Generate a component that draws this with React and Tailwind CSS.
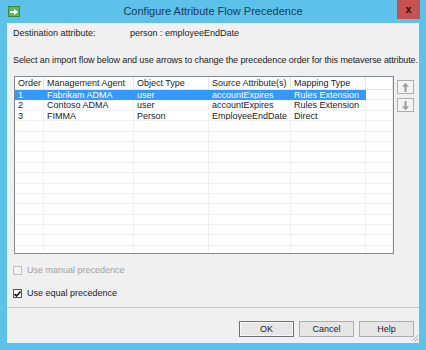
import React from 'react';

const rows = [
  { order: '1', agent: 'Fabrikam ADMA', type: 'user', source: 'accountExpires', mapping: 'Rules Extension' },
  { order: '2', agent: 'Contoso ADMA', type: 'user', source: 'accountExpires', mapping: 'Rules Extension' },
  { order: '3', agent: 'FIMMA', type: 'Person', source: 'EmployeeEndDate', mapping: 'Direct' },
];

const cols = ['w-[29px]', 'w-[90px]', 'w-[75px]', 'w-[82px]', 'w-[75px]', 'flex-1'];

const App = () => {
  const selected = 0;

  return (
    <div className="w-[426px] h-[350px] bg-[#5cc2ea] flex flex-col font-['Liberation_Sans',Arial,sans-serif] text-[#1b1b1b] overflow-hidden">
      {/* Title bar */}
      <div className="h-[23px] flex items-start relative shrink-0">
        <div className="ml-[8px] mt-[6px] w-[12px] h-[11px] bg-[#5cb85c] border border-[#3a8a3a] flex items-center justify-center">
          <svg width="8" height="6" viewBox="0 0 8 6">
            <path d="M0 2h4V0l4 3-4 3V4H0z" fill="#fff" />
          </svg>
        </div>
        <div className="absolute left-0 right-0 top-[5px] text-center text-[11px] leading-[13px] text-[#1e3a56]">
          Configure Attribute Flow Precedence
        </div>
        <div className="absolute right-[6px] top-0 w-[23px] h-[19px] bg-[#c75050] flex items-center justify-center text-[#2a0505] text-[10px] leading-none font-bold">
          x
        </div>
      </div>

      {/* Client area */}
      <div className="mx-[7px] mb-[7px] flex-1 bg-[#f0f0f0] flex flex-col text-[9px] leading-[11px]">
        <div className="flex mt-[5px] ml-[6px]">
          <span className="w-[117px]">Destination attribute:</span>
          <span>person : employeeEndDate</span>
        </div>
        <div className="mt-[16px] ml-[6px] tracking-[-0.1px]">
          Select an import flow below and use arrows to change the precedence order for this metaverse attribute.
        </div>

        <div className="flex mt-[10px] ml-[7px]">
          {/* List view */}
          <div className="w-[380px] h-[178px] bg-white border border-[#828790] flex flex-col overflow-hidden">
            <div className="flex h-[13px] border-b border-[#e5e5e5] shrink-0">
              {['Order', 'Management Agent', 'Object Type', 'Source Attribute(s)', 'Mapping Type', ''].map((h, i) => (
                <div key={i} className={`${cols[i]} border-r border-[#e5e5e5] pl-[3px] leading-[12px] truncate`}>
                  {h}
                </div>
              ))}
            </div>
            {Array.from({ length: 16 }).map((_, r) => {
              const row = rows[r];
              const sel = r === selected;
              return (
                <div key={r} className="flex h-[10.4px] shrink-0">
                  {[row?.order, row?.agent, row?.type, row?.source, row?.mapping, null].map((v, i) => (
                    <div
                      key={i}
                      className={`${cols[i]} pl-[3px] leading-[10px] truncate border-r border-b ${
                        sel && i < 5 ? 'bg-[#3399ff] text-white border-[#3399ff]' : 'border-[#f0f0f0]'
                      }`}
                    >
                      {v}
                    </div>
                  ))}
                </div>
              );
            })}
          </div>

          {/* Arrows */}
          <div className="flex flex-col gap-[4px] ml-[3px] mt-[4px]">
            <div className="w-[17px] h-[14px] border border-[#adadad] bg-[#f3f3f3] flex items-center justify-center">
              <svg width="7" height="9" viewBox="0 0 7 9">
                <path d="M3.5 0L7 3.5H4.5V9h-2V3.5H0z" fill="#9a9a9a" />
              </svg>
            </div>
            <div className="w-[17px] h-[14px] border border-[#adadad] bg-[#f3f3f3] flex items-center justify-center">
              <svg width="7" height="9" viewBox="0 0 7 9">
                <path d="M3.5 9L7 5.5H4.5V0h-2v5.5H0z" fill="#9a9a9a" />
              </svg>
            </div>
          </div>
        </div>

        {/* Checkboxes */}
        <div className="flex items-center mt-[11px] ml-[6px] text-[#a0a0a0]">
          <div className="w-[9px] h-[9px] border border-[#c0c0c0] bg-[#f4f4f4]" />
          <span className="ml-[5px]">Use manual precedence</span>
        </div>
        <div className="flex items-center mt-[12px] ml-[6px]">
          <div className="w-[9px] h-[9px] border border-[#555] bg-white flex items-center justify-center">
            <svg width="7" height="6" viewBox="0 0 7 6">
              <path d="M0.5 3l2 2 4-4.5" stroke="#111" strokeWidth="1.6" fill="none" />
            </svg>
          </div>
          <span className="ml-[5px]">Use equal precedence</span>
        </div>

        <div className="mt-[8px] border-t border-[#c8c8c8]" />

        {/* Buttons */}
        <div className="flex justify-end gap-[5px] mt-[13px] mr-[5px] relative">
          <div className="w-[55px] h-[16px] border border-[#707070] bg-[#e6e6e6] flex items-center justify-center shadow-[inset_0_0_0_1px_#f8f8f8]">
            OK
          </div>
          <div className="w-[55px] h-[16px] border border-[#adadad] bg-[#e6e6e6] flex items-center justify-center">
            Cancel
          </div>
          <div className="w-[55px] h-[16px] border border-[#adadad] bg-[#e6e6e6] flex items-center justify-center">
            Help
          </div>
          <svg className="absolute right-[-5px] bottom-[-5px]" width="8" height="8" viewBox="0 0 8 8">
            <path d="M7 1L1 7M7 4L4 7M7 6.5L6.5 7" stroke="#a8a8a8" strokeWidth="1" />
          </svg>
        </div>
      </div>
    </div>
  );
};

export default App;
